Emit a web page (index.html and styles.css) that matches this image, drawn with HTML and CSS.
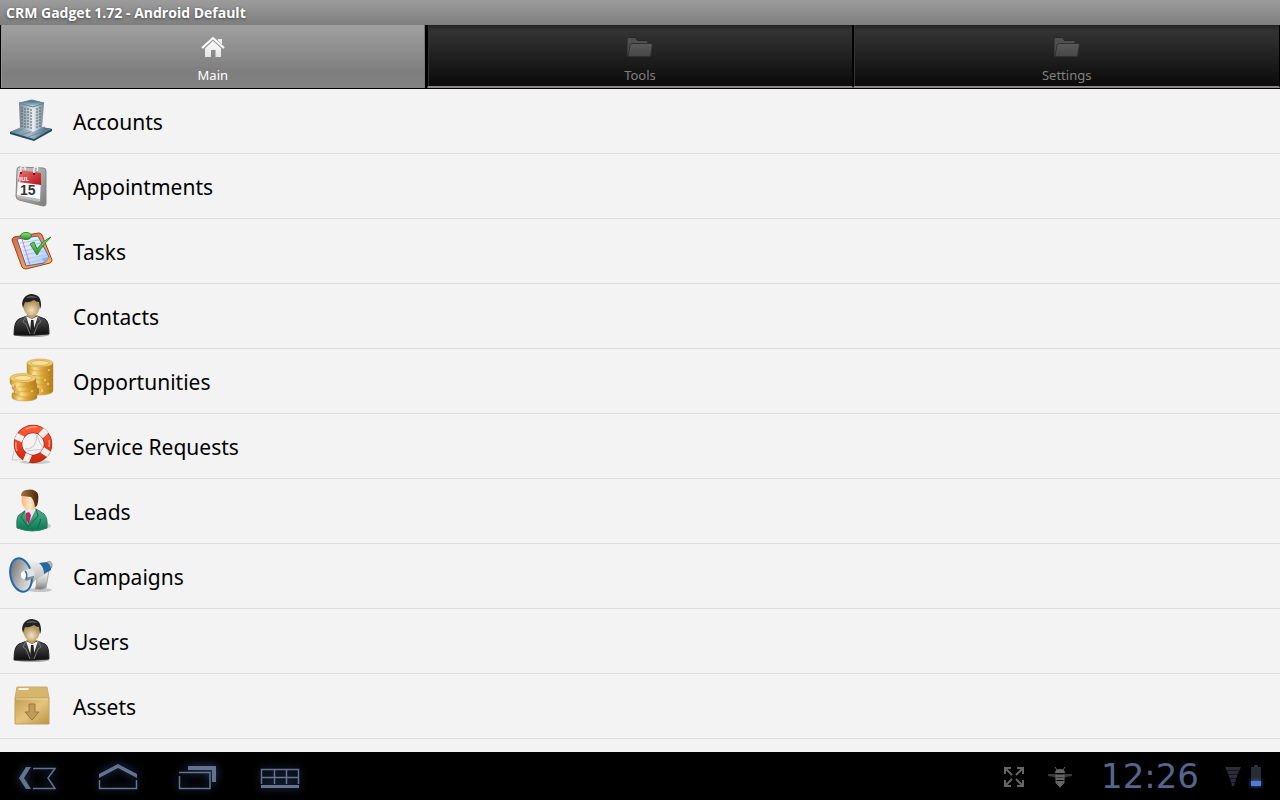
FILE: index.html
```html
<!DOCTYPE html>
<html lang="en">

<head>
    <meta charset="UTF-8">
    <meta name="viewport" content="width=device-width, initial-scale=1.0">
    <title>CRM Gadget</title>
    <link rel="stylesheet" href="styles.css">
</head>

<body>
    <!-- shared shapes and gradients -->
    <svg class="defs" width="0" height="0" aria-hidden="true">
        <defs>
            <linearGradient id="white" x2="0" y2="1"><stop offset="0" stop-color="#fff" /><stop offset="1" stop-color="#e4e4e4" /></linearGradient>
            <linearGradient id="glass"><stop offset="0" stop-color="#76868f" /><stop offset=".5" stop-color="#a9b6bd" /><stop offset="1" stop-color="#e6edf0" /></linearGradient>
            <linearGradient id="side"><stop offset="0" stop-color="#eaf1f4" /><stop offset="1" stop-color="#70828e" /></linearGradient>
            <linearGradient id="roof" x2="0" y2="1"><stop offset="0" stop-color="#2f627b" /><stop offset="1" stop-color="#c6dce5" /></linearGradient>
            <linearGradient id="ground"><stop offset="0" stop-color="#5d7d90" /><stop offset=".5" stop-color="#a9bcc7" /><stop offset="1" stop-color="#31566e" /></linearGradient>
            <linearGradient id="steel" x2="1" y2="1"><stop offset="0" stop-color="#d2d2d2" /><stop offset="1" stop-color="#7c7c7c" /></linearGradient>
            <linearGradient id="red" x2="1" y2="1"><stop offset="0" stop-color="#e8787a" /><stop offset="1" stop-color="#b90f18" /></linearGradient>
            <linearGradient id="board" x2="1" y2="1"><stop offset="0" stop-color="#e0633a" /><stop offset="1" stop-color="#ffbd52" /></linearGradient>
            <linearGradient id="paper" x2="1" y2="1"><stop offset="0" stop-color="#fff" /><stop offset="1" stop-color="#a9c9fa" /></linearGradient>
            <linearGradient id="green" x2="0" y2="1"><stop offset="0" stop-color="#a2e67b" /><stop offset="1" stop-color="#1f8c2c" /></linearGradient>
            <radialGradient id="skin" cy=".7"><stop offset="0" stop-color="#f3e2bf" /><stop offset="1" stop-color="#b1935c" /></radialGradient>
            <linearGradient id="suit" x2="0" y2="1"><stop offset="0" stop-color="#555" /><stop offset="1" stop-color="#0c0c0c" /></linearGradient>
            <linearGradient id="gold"><stop offset="0" stop-color="#c58d22" /><stop offset=".3" stop-color="#fbe08a" /><stop offset=".6" stop-color="#dba434" /><stop offset="1" stop-color="#b27916" /></linearGradient>
            <linearGradient id="ring" x2="0" y2="1"><stop offset="0" stop-color="#ff5a33" /><stop offset="1" stop-color="#d32a12" /></linearGradient>
            <linearGradient id="face"><stop offset="0" stop-color="#ffb37a" /><stop offset=".6" stop-color="#ffe9cf" /><stop offset="1" stop-color="#efb27b" /></linearGradient>
            <linearGradient id="hair" x2="1"><stop offset="0" stop-color="#a4743a" /><stop offset="1" stop-color="#4b260b" /></linearGradient>
            <linearGradient id="jacket" x2="0" y2="1"><stop offset="0" stop-color="#56b391" /><stop offset="1" stop-color="#087552" /></linearGradient>
            <linearGradient id="cone" x2="1" y2="1"><stop offset="0" stop-color="#5e5e5e" /><stop offset=".6" stop-color="#c4c4c4" /><stop offset="1" stop-color="#f5f5f5" /></linearGradient>
            <linearGradient id="horn" x2="0" y2="1"><stop offset="0" stop-color="#fafafa" /><stop offset=".6" stop-color="#c2c2c2" /><stop offset="1" stop-color="#777" /></linearGradient>
            <linearGradient id="box" x2="1" y2="1"><stop offset="0" stop-color="#c39b4e" /><stop offset=".5" stop-color="#e4c47e" /><stop offset="1" stop-color="#bd9345" /></linearGradient>
            <linearGradient id="folderFill" x2="0" y2="1"><stop offset="0" stop-color="#5a5a5a" /><stop offset="1" stop-color="#474747" /></linearGradient>
        </defs>
        <symbol id="folder" viewBox="0 0 32 32">
            <path d="M3 24V7q0-1.500 1.500-1.500h7l2 3h9q1.500 0 1.500 1.500v14z" fill="#505050" stroke="#262626" />
            <path d="M4 24l2-11q.3-1.500 2-1.500h19q1.500 0 1.300 1.500l-1.500 10q-.2 1.500-1.500 1.500H5q-1 0-1-.5z" fill="url(#folderFill)" stroke="#303030" />
        </symbol>
        <symbol id="person" viewBox="0 0 48 48">
            <ellipse cx="24" cy="42" rx="17" ry="2" fill="#aaa" />
            <path d="M6 42Q6 28 11 26L19 23H29L37 26Q41 28 41 41Q24 43 6 42z" fill="url(#suit)" stroke="#222" />
            <path d="M18 23L24 41L30 23L24 26z" fill="#f2f2f2" />
            <path d="M23 27H25.500L26.500 40L24 42L22 40z" fill="#222" />
            <path d="M18 23L15 29L18 31L22 41M30 23L33 29L30 31L26 41" fill="none" stroke="#777" />
            <path d="M19 17H28V23L24 26L19 23z" fill="#b99d69" />
            <path d="M15 11Q15 5 24 5T32 11Q32 22 24 23Q15 22 15 11z" fill="url(#skin)" />
            <path d="M15 15Q13 9 16 5Q19 1 24 1Q31 2 32 6Q34 12 32 16L31 9Q28 9 26 7Q21 10 17 9z" fill="#222" />
            <path d="M18 5Q23 1 30 5Q24 4 18 5z" fill="#666" />
        </symbol>
    </svg>

    <header class="titleBar">
        <h1>CRM Gadget 1.72 - Android Default</h1>
    </header>

    <nav class="tabs">
        <button type="button" class="tab selected">
            <svg viewBox="0 0 32 32" aria-hidden="true">
                <path d="M21 7h4v6l-4-4z" fill="#eee" />
                <path d="M8 16L16 8L24 16V25H18.500V18H14V25H8z" fill="url(#white)" />
                <path d="M5.500 16.500L16 6.500L27 16.500" fill="none" stroke="#999" stroke-width="3.500" />
                <path d="M5 16L16 6L27 16" fill="none" stroke="#fff" stroke-width="2" />
            </svg>
            <span>Main</span>
        </button>
        <button type="button" class="tab">
            <svg viewBox="0 0 32 32" aria-hidden="true"><use href="#folder" /></svg>
            <span>Tools</span>
        </button>
        <button type="button" class="tab">
            <svg viewBox="0 0 32 32" aria-hidden="true"><use href="#folder" /></svg>
            <span>Settings</span>
        </button>
    </nav>

    <main class="content">
        <ul class="menu">
            <li><a href="#accounts">
                <svg viewBox="0 0 48 48" aria-hidden="true">
                    <path d="M2 34L20 27L44 31V33L26 43L2 36z" fill="#234b62" />
                    <path d="M2 34L20 26L44 31L26 41z" fill="url(#ground)" />
                    <path d="M7 34L20 29M13 37L37 29M20 39L42 31" stroke="#6d8c9d" />
                    <path d="M11 5L25 8V34L12 30z" fill="url(#glass)" />
                    <path d="M25 8L36 5L34 30L25 34z" fill="url(#side)" />
                    <path d="M11 5L24 2L36 5L25 9z" fill="url(#roof)" stroke="#5f8496" />
                    <path d="M14 9V29M17 10V30M20 10V31M23 11V32M29 10V31M32 9V30" stroke="#55646f" stroke-dasharray="2 1" />
                </svg>
                <span>Accounts</span></a></li>
            <li><a href="#appointments">
                <svg viewBox="0 0 48 48" aria-hidden="true">
                    <path d="M11 4L35 5Q38 5 38 8V41Q38 43 35 43L11 37Q8 36 8 33L9 7Q9 4 11 4z" fill="url(#steel)" stroke="#858585" />
                    <path d="M11 8L33 11L32 38L9 33z" fill="#fff" />
                    <path d="M12 7L33 10V22L10 19z" fill="url(#red)" />
                    <path d="M32 36L31 39L9 34V32z" fill="#bbb" />
                    <path d="M13 9Q12 3 15 3T17 7M26 10Q25 4 28 4T29 8" fill="none" stroke="#eee" stroke-width="1.500" />
                    <circle cx="13" cy="10" r="1" fill="#500" /><circle cx="26" cy="11" r="1" fill="#500" />
                    <text x="11" y="18" class="calMonth">JUL</text>
                    <text x="12" y="32" class="calDay">15</text>
                </svg>
                <span>Appointments</span></a></li>
            <li><a href="#tasks">
                <svg viewBox="0 0 48 48" aria-hidden="true">
                    <path d="M6 9L31 5Q33 5 34 7L44 32Q44 34 42 35L18 41Q15 41 14 39L4 12Q4 10 6 9z" fill="url(#board)" stroke="#963f28" />
                    <path d="M9 11L30 8L41 29L36 35L18 38z" fill="url(#paper)" stroke="#3e69c4" />
                    <path d="M12 15L31 12M14 19L33 15M15 23L35 19M16 27L36 23M18 31L38 27M19 35L36 31" stroke="#b4c4e6" />
                    <path d="M14 11L22 37" stroke="#dd78cf" />
                    <path d="M41 29L34 30L36 35z" fill="#8db2f0" />
                    <ellipse cx="18" cy="8" rx="5.500" ry="3.500" fill="url(#green)" stroke="#328132" />
                    <path d="M22 16L26 14L29 21Q35 12 43 9Q34 17 29 27z" fill="url(#green)" stroke="#2b8b27" />
                </svg>
                <span>Tasks</span></a></li>
            <li><a href="#contacts">
                <svg viewBox="0 0 48 48" aria-hidden="true"><use href="#person" /></svg>
                <span>Contacts</span></a></li>
            <li><a href="#opportunities">
                <svg viewBox="0 0 48 48" aria-hidden="true">
                    <g fill="url(#gold)" stroke="#c39440" stroke-width=".5">
                        <path d="M19 28v5a13 4 0 0 0 26 0v-5z" />
                        <path d="M20 23v5a12.500 4 0 0 0 25 0v-5z" />
                        <path d="M19 18v5a13 4 0 0 0 26 0v-5z" />
                        <path d="M20 14v4a12.500 4 0 0 0 25 0v-4z" />
                        <path d="M19 9v5a13 4 0 0 0 26 0v-5z" />
                        <path d="M19 5v4a13 4 0 0 0 26 0v-4z" />
                        <ellipse cx="32" cy="5" rx="13" ry="4" fill="#edcb70" />
                        <ellipse cx="32" cy="5" rx="9" ry="2.500" fill="#f8df95" />
                        <path d="M4 35v5a13 4 0 0 0 25 0v-5z" />
                        <path d="M6 30v5a12.500 4 0 0 0 25 0v-5z" />
                        <path d="M4 25v5a12.500 4 0 0 0 25 0v-5z" />
                        <path d="M2 20v5a13 4 0 0 0 26 0v-5z" />
                        <ellipse cx="15" cy="20" rx="13" ry="4.500" fill="#efcc70" />
                        <ellipse cx="15" cy="20" rx="9" ry="2.500" fill="#f9e29d" />
                    </g>
                    <path d="M5 26v3M9 27v3M8 33v2M25 15v2M37 21v2M41 11v2M40 25v2M34 31v3M24 32v2" stroke="#fff0a9" />
                </svg>
                <span>Opportunities</span></a></li>
            <li><a href="#service">
                <svg viewBox="0 0 48 48" aria-hidden="true">
                    <ellipse cx="27" cy="39" rx="15" ry="2" fill="#ccc" />
                    <path d="M6 28L4 37Q12 38 18 34M17 26Q28 27 29 12Q31 20 36 26L19 28" fill="none" stroke="#c8c8c8" />
                    <circle cx="25" cy="21" r="15" fill="none" stroke="#a52b1b" stroke-width="8.500" />
                    <circle cx="25" cy="21" r="15" fill="none" stroke="url(#ring)" stroke-width="7" />
                    <g stroke="#f0f0f0" stroke-width="6.500">
                        <path d="M36 21H44" transform="rotate(-46 25 21)" />
                        <path d="M36 21H44" transform="rotate(33 25 21)" />
                        <path d="M36 21H44" transform="rotate(112 25 21)" />
                        <path d="M36 21H44" transform="rotate(205 25 21)" />
                    </g>
                    <path d="M18 6Q24 3 29 4M41 17Q42 20 41 24M9 28Q7 24 8 19" stroke="#ff967c" stroke-width="1.500" fill="none" />
                </svg>
                <span>Service Requests</span></a></li>
            <li><a href="#leads">
                <svg viewBox="0 0 48 48" aria-hidden="true">
                    <ellipse cx="29" cy="38" rx="14" ry="4" fill="#ccc" />
                    <path d="M9 40Q8 30 11 27L18 22L28 21L36 26Q40 30 39 40Q25 46 9 40z" fill="url(#jacket)" stroke="#2c8063" />
                    <path d="M17 22L20 37L28 21L24 19z" fill="#e9e3f2" />
                    <path d="M18 25L21 24L23 27L21 37L18 31z" fill="#bd2857" />
                    <path d="M17 23L13 29L20 39L30 28L28 21M33 31L30 40" fill="none" stroke="#116b4c" />
                    <path d="M14 7Q18 3 27 9L28 19Q23 24 19 22Q12 18 14 7z" fill="url(#face)" />
                    <path d="M13 8Q13 3 18 2Q27 0 30 6Q31 11 29 18L27 19Q26 12 23 9L14 8z" fill="url(#hair)" />
                </svg>
                <span>Leads</span></a></li>
            <li><a href="#campaigns">
                <svg viewBox="0 0 48 48" aria-hidden="true">
                    <ellipse cx="32" cy="37" rx="12" ry="2" fill="#c6c6c6" />
                    <path d="M28 20L41 17L38 35Q33 38 27 36Q30 30 28 20z" fill="url(#horn)" stroke="#aaa" />
                    <path d="M12 4L35 11L39 20L27 27L19 38z" fill="url(#horn)" />
                    <path d="M31 10L39 9Q44 13 43 17L36 21Q36 14 31 10z" fill="#2468a6" />
                    <path d="M39 9L42 8Q45 10 44 14L43 15Q42 11 39 9z" fill="#bbb" stroke="#777" stroke-width=".5" />
                    <ellipse cx="13" cy="22" rx="10.500" ry="17" transform="rotate(-12 13 22)" fill="url(#cone)" stroke="#236aab" stroke-width="2" />
                    <path d="M15 18L24 15Q28 18 26 23L17 26z" fill="#e4e4e4" />
                    <path d="M16 25L26 23V25L18 28z" fill="#8a8a8a" />
                    <ellipse cx="16" cy="22" rx="3" ry="4" fill="#fff" />
                    <path d="M17 18Q20 21 18 26" fill="none" stroke="#2470af" stroke-width="1.500" />
                </svg>
                <span>Campaigns</span></a></li>
            <li><a href="#users">
                <svg viewBox="0 0 48 48" aria-hidden="true"><use href="#person" /></svg>
                <span>Users</span></a></li>
            <li><a href="#assets">
                <svg viewBox="0 0 48 48" aria-hidden="true">
                    <path d="M9 4H39L41 15H7z" fill="#d8b56c" stroke="#c9aa70" />
                    <path d="M7 15H41V41H7z" fill="url(#box)" stroke="#c0a064" />
                    <path d="M11 5H21L20 7H10z" fill="#f7f2df" />
                    <path d="M8 16H40" stroke="#f1dba4" />
                    <path d="M21 21H27V29H31L24 37L17 29H21z" fill="#bf9c58" stroke="#98783f" />
                </svg>
                <span>Assets</span></a></li>
        </ul>
    </main>

    <footer class="systemBar">
        <div class="navButtons">
            <button type="button" aria-label="Back">
                <svg viewBox="0 0 80 48" aria-hidden="true">
                    <path d="M26 15H31L24 26L31 37H26L19 26z" fill="#66738f" />
                    <path d="M33 16.500H55L48 26L55 36.500H33" fill="none" stroke="#66738f" stroke-width="1.500" />
                </svg>
            </button>
            <button type="button" aria-label="Home">
                <svg viewBox="0 0 80 48" aria-hidden="true">
                    <path d="M19 22L38 12L57 22V26L38 16L19 26z" fill="#66738f" />
                    <path d="M19.500 28V36.500H56.500V28" fill="none" stroke="#66738f" stroke-width="1.500" />
                </svg>
            </button>
            <button type="button" aria-label="Recent apps">
                <svg viewBox="0 0 80 48" aria-hidden="true">
                    <path d="M28 14H56V30H52V18H28z" fill="#66738f" />
                    <path d="M19 20.500H50V36.500H19.500V24" fill="none" stroke="#66738f" stroke-width="1.500" />
                </svg>
            </button>
            <button type="button" aria-label="Menu">
                <svg viewBox="0 0 80 48" aria-hidden="true">
                    <path d="M21.500 32V17.500H58.500V32M21 25.500H59M34.500 18V32M46.500 18V32" fill="none" stroke="#66738f" stroke-width="1.500" />
                    <path d="M21 33H59V36H21z" fill="#66738f" />
                </svg>
            </button>
        </div>
        <div class="status">
            <button type="button" aria-label="Full screen">
                <svg class="expandIcon" viewBox="0 0 20 48" aria-hidden="true">
                    <path d="M1 22V16H7M1 16L8 23M13 16H19V22M19 16L12 23M1 28V34H7M1 34L8 27M13 34H19V28M19 34L12 27" fill="none" stroke="#666" stroke-width="2" />
                </svg>
            </button>
            <svg class="bugIcon" viewBox="0 0 24 48" aria-hidden="true">
                <path d="M0 22H24V24L18 25L15 27H9L6 25L0 24z" fill="#383838" />
                <path d="M7 21Q7 17 12 17T17 21z" fill="#666" />
                <path d="M9 18L7 15M15 18L17 15" stroke="#666" />
                <path d="M8 24H16M8 27H16M8 30H16" stroke="#666" stroke-width="2" />
                <path d="M8 22V31L12 35L16 31V22" fill="none" stroke="#666" />
                <path d="M9 31H15L12 36z" fill="#666" />
            </svg>
            <time class="clock">12:26</time>
            <svg class="signalIcon" viewBox="0 0 16 48" aria-hidden="true">
                <path d="M0 15H16L14.500 18.500H1.500zM2 19H14L12.700 22.500H3.300zM3.500 23H12.500L11.300 26.500H4.700zM5 27H11L10 30.500H6zM6.200 31H9.800L9 34H7z" fill="#2b2e38" />
            </svg>
            <svg class="batteryIcon" viewBox="0 0 12 48" aria-hidden="true">
                <path d="M4 13H8V15H11V34H1V15H4z" fill="#292c36" />
                <path class="charge" d="M1 29H11V34H1z" fill="#527bd0" />
            </svg>
        </div>
    </footer>
</body>

</html>
```
FILE: styles.css
```css
* {
    box-sizing: border-box;
}
body {
    margin: 0;
    height: 100vh;
    display: flex;
    flex-direction: column;
    font-family: "Noto Sans", "Open Sans", sans-serif;
    background: #f3f3f3;
    color: #000;
}
button {
    padding: 0;
    border: 0;
    background: none;
    font: inherit;
    cursor: pointer;
}
svg {
    display: block;
    flex: none;
}
.defs {
    position: absolute;
}
.titleBar {
    padding: 0 6px;
    background: linear-gradient(#9c9c9c, #7e7e7e);
}
.titleBar h1 {
    margin: 0;
    font-family: "Open Sans", sans-serif;
    font-size: 14px;
    font-weight: 700;
    line-height: 25px;
    color: #fff;
    text-shadow: 0 1px 3px #444;
}
.tabs {
    display: grid;
    grid-template-columns: repeat(3, 1fr);
    background: #000;
    border-bottom: 1px solid #000;
}
.tab {
    display: flex;
    flex-direction: column;
    align-items: center;
    height: 63px;
    padding-top: 7px;
    border-left: 1px solid #000;
    border-right: 1px solid #000;
    border-bottom: 2px solid #8b878b;
    background: linear-gradient(#222, #333 10%, #0a0a0a);
    box-shadow: inset 1px 0 #333;
    font-size: 13px;
    line-height: 22px;
    color: #808080;
}
.tab.selected {
    border-right-width: 2px;
    border-bottom: 0;
    background: linear-gradient(#a0a0a0, #7e7e7e 75%, #828282);
    box-shadow: inset 1px 0 #999, inset -1px 0 #777;
    color: #fff;
}
.tab svg {
    width: 32px;
    height: 32px;
}
.content {
    flex: 1;
    min-height: 0;
    overflow: hidden;
}
.menu {
    margin: 0;
    padding: 0;
    list-style: none;
}
.menu li {
    border-bottom: 1px solid #dcdcdc;
}
.menu a {
    display: flex;
    align-items: center;
    gap: 17px;
    padding: 9px 8px 7px;
    font-size: 21px;
    line-height: 48px;
    color: #000;
    text-decoration: none;
}
.menu svg {
    width: 48px;
    height: 48px;
}
.calMonth {
    font-size: 6px;
    font-weight: 700;
    fill: #fff;
}
.calDay {
    font-family: "Liberation Sans", sans-serif;
    font-size: 14px;
    font-weight: 700;
    fill: #333;
}
.systemBar {
    display: flex;
    justify-content: space-between;
    height: 48px;
    background: #000;
}
.navButtons {
    display: flex;
}
.navButtons svg {
    width: 80px;
    height: 48px;
    filter: drop-shadow(0 0 4px #2c4678);
}
.status {
    display: flex;
    align-items: center;
    padding-right: 18px;
}
.status svg {
    height: 48px;
}
.expandIcon {
    width: 20px;
}
.bugIcon {
    width: 24px;
    margin-left: 24px;
}
.clock {
    width: 120px;
    margin: 0 15px 0 18px;
    font-family: "DejaVu Sans", sans-serif;
    font-size: 34px;
    line-height: 48px;
    text-align: center;
    color: #55658d;
}
.signalIcon {
    width: 16px;
}
.batteryIcon {
    width: 12px;
    margin-left: 9px;
    overflow: visible;
}
.charge {
    filter: drop-shadow(0 0 2px #3f6fd0);
}
```
